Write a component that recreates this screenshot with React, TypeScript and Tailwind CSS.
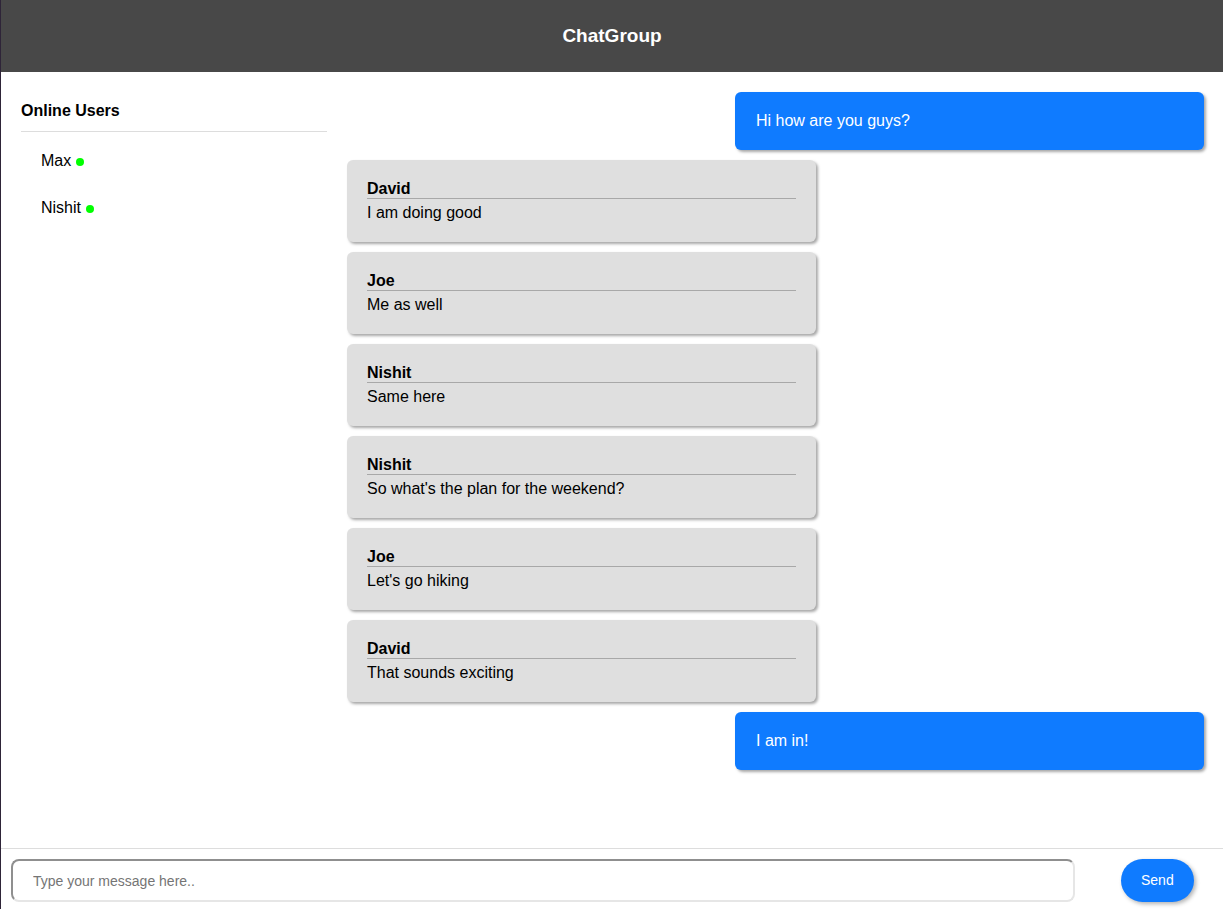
import { useState } from "react";

type Msg = { own: boolean; user?: string; text: string };

const messages: Msg[] = [
  { own: true, text: "Hi how are you guys?" },
  { own: false, user: "David", text: "I am doing good" },
  { own: false, user: "Joe", text: "Me as well" },
  { own: false, user: "Nishit", text: "Same here" },
  { own: false, user: "Nishit", text: "So what's the plan for the weekend?" },
  { own: false, user: "Joe", text: "Let's go hiking" },
  { own: false, user: "David", text: "That sounds exciting" },
  { own: true, text: "I am in!" },
];

const onlineUsers = ["Max", "Nishit"];

const App = () => {
  const [text, setText] = useState("");

  return (
    <div className="h-screen flex flex-col bg-white border-l border-[#2e2438] font-['Liberation_Sans',Arial,sans-serif] text-black">
      {/* header */}
      <header className="h-[72px] shrink-0 bg-[#484848] flex items-center justify-center">
        <h1 className="text-[19px] font-bold text-white">ChatGroup</h1>
      </header>

      <div className="flex-1 flex min-h-0">
        {/* online users */}
        <aside className="w-[306px] ml-[20px] pt-[30px] shrink-0">
          <h2 className="text-[16px] leading-[18px] font-bold pb-[11px] border-b border-[#dddddd]">Online Users</h2>
          <ul className="pt-[20px] pl-[20px]">
            {onlineUsers.map((u) => (
              <li key={u} className="flex items-center text-[16px] leading-[18px] mb-[29px]">
                {u}
                <span className="ml-[5px] mt-[2px] w-[8px] h-[8px] rounded-full bg-[#00ff00]" />
              </li>
            ))}
          </ul>
        </aside>

        {/* messages */}
        <main className="flex-1 flex flex-col gap-[10px] pt-[20px] pl-[20px] pr-[19px] overflow-hidden">
          {messages.map((m, i) =>
            m.own ? (
              <div
                key={i}
                className="self-end w-[469px] bg-[#0f7bff] text-white rounded-[6px] px-[21px] py-[20px] text-[16px] leading-[18px] shadow-[2px_2px_3px_rgba(0,0,0,0.35)]"
              >
                {m.text}
              </div>
            ) : (
              <div
                key={i}
                className="self-start w-[469px] bg-[#dfdfdf] rounded-[6px] px-[20px] pt-[20px] pb-[20px] shadow-[2px_2px_3px_rgba(0,0,0,0.35)]"
              >
                <div className="text-[16px] leading-[18px] font-bold border-b border-[#a8a8a8]">{m.user}</div>
                <div className="text-[16px] leading-[18px] pt-[5px]">{m.text}</div>
              </div>
            )
          )}
        </main>
      </div>

      {/* message input */}
      <footer className="h-[61px] shrink-0 border-t border-[#dddddd] flex items-start pt-[10px] pl-[10px]">
        <input
          type="text"
          value={text}
          onChange={(e) => setText(e.target.value)}
          placeholder="Type your message here.."
          className="w-[1064px] h-[43px] rounded-[8px] border-2 border-t-[#8f8f8f] border-l-[#8f8f8f] border-b-[#e6e6e6] border-r-[#e6e6e6] px-[20px] text-[14px] placeholder:text-[#757575] outline-none"
        />
        <button className="ml-[46px] h-[43px] px-[20px] rounded-full bg-[#0f7bff] text-white text-[14px] shadow-[2px_2px_4px_rgba(0,0,0,0.3)]">
          Send
        </button>
      </footer>
    </div>
  );
};

export default App;
